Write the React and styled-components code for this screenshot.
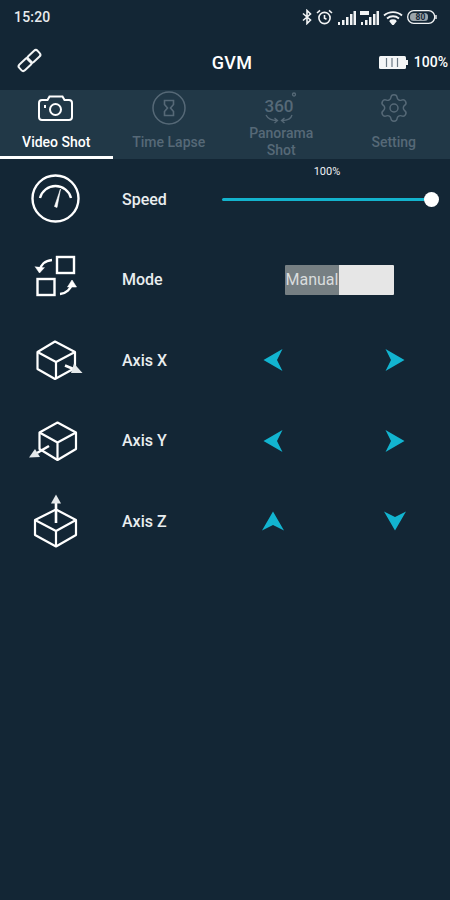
import React from "react";
import styled, { createGlobalStyle } from "styled-components";
import { Settings } from "lucide-react";

const Global = createGlobalStyle`
  html, body { margin: 0; padding: 0; background: #132635; }
  body { font-family: Roboto, "Liberation Sans", sans-serif; }
`;
const Page = styled.div`width: 450px; height: 900px; background: #132635; color: #f2f4f5; overflow: hidden;`;
const StatusBar = styled.div`height: 34px; display: flex; align-items: center; justify-content: space-between; padding: 0 13px 0 14px;`;
const Time = styled.span`font-size: 14px; font-weight: 500; letter-spacing: 0.2px; color: #e8ebed;`;
const StatusIcons = styled.div`display: flex; align-items: center; gap: 4px;`;
const Header = styled.div`height: 56px; display: grid; grid-template-columns: 1fr auto 1fr; align-items: center; padding: 0 2px 0 16px;`;
const Title = styled.div`font-size: 18px; font-weight: 500; letter-spacing: 0.3px; color: #fff;`;
const Power = styled.div`display: flex; align-items: center; justify-content: flex-end; gap: 6px; font-size: 14px; font-weight: 500; color: #fff;`;
const TabBar = styled.div`height: 69px; display: grid; grid-template-columns: repeat(4, 1fr); background: #213847;`;
const Tab = styled.div`
  position: relative; display: flex; flex-direction: column; align-items: center;
  color: ${p => p.$active ? "#ffffff" : "#566977"};
  ${p => p.$active && `&::after { content: ""; position: absolute; left: 0; right: 0; bottom: 0; height: 3px; background: #fff; }`}
`;
const TabIcon = styled.div`height: 36px; display: flex; align-items: center; justify-content: center;`;
const TabLabel = styled.div`
  flex: 1; display: flex; align-items: center; text-align: center; width: 80px; justify-content: center;
  font-size: 14px; line-height: 17px; font-weight: 500; margin-top: -1px;
`;
const Rows = styled.div`display: flex; flex-direction: column;`;
const Row = styled.div`height: 80.5px; display: grid; grid-template-columns: 112px 110px 1fr; align-items: center;`;
const IconCell = styled.div`display: flex; justify-content: center; svg { display: block; }`;
const Label = styled.div`padding-left: 10px; font-size: 16px; font-weight: 500; color: #e9edef;`;
const Slider = styled.div`position: relative; width: 210px; height: 3px; background: #13b3cd; border-radius: 2px;`;
const Thumb = styled.div`position: absolute; right: -7px; top: -6px; width: 15px; height: 15px; border-radius: 50%; background: #fff;`;
const SliderValue = styled.div`position: absolute; left: 0; right: 0; top: -33px; text-align: center; font-size: 11px; color: #f0f2f3;`;
const Toggle = styled.div`margin-left: 63px; width: 109px; height: 30px; display: grid; grid-template-columns: 54px 1fr; border-radius: 1px; overflow: hidden;`;
const ToggleOff = styled.div`background: #767f83; color: #d9dcdd; font-size: 16px; display: flex; align-items: center; justify-content: center;`;
const ToggleOn = styled.div`background: #e6e6e6;`;
const ArrowPair = styled.div`display: flex; justify-content: space-between; padding: 0 43px 0 39px;`;
const Arrow = styled.svg`display: block; width: 24px; height: 24px; fill: #12b4d0; transform: rotate(${p => p.$deg}deg);`;

const NavArrow = ({ deg }) => (
  <Arrow $deg={deg} viewBox="0 0 24 24"><path d="M2.5 12 21.5 1 16 12 21.5 23Z" /></Arrow>
);

const Bluetooth = () => (
  <svg width="10" height="16" viewBox="0 0 10 16" fill="none" stroke="#f2f4f5" strokeWidth="1.6"><path d="M1 4.5 8.5 11 5 14.5V1.5L8.5 5 1 11.5" /></svg>
);
const Alarm = () => (
  <svg width="17" height="16" viewBox="0 0 17 16" fill="none" stroke="#f2f4f5" strokeWidth="1.6"><circle cx="8.5" cy="9" r="5.6" /><path d="M8.5 6v3.2l2 1M1 4l3-2.6M16 4l-3-2.6" /></svg>
);
const Signal = ({ hd }) => (
  <svg width="19" height="15" viewBox="0 0 19 15" fill="#f2f4f5">
    <rect x="1" y="12" width="2" height="3" /><rect x="5" y="10" width="2.5" height="5" /><rect x="9" y="7" width="2.5" height="8" />
    <rect x="13" y={hd ? 4 : 4} width="2.5" height="11" /><rect x="16.5" y="1" width="2.5" height="14" />
    {hd && <rect x="0" y="1" width="9" height="4" />}
  </svg>
);
const Wifi = () => (
  <svg width="20" height="15" viewBox="0 0 20 15" fill="none" stroke="#f2f4f5" strokeWidth="1.8">
    <path d="M1 5.5C6 1 14 1 19 5.5M4 8.5C7.5 5.5 12.5 5.5 16 8.5M7 11C8.5 9.8 11.5 9.8 13 11" /><path d="M10 14.5 8 12h4Z" fill="#f2f4f5" />
  </svg>
);
const PhoneBattery = () => (
  <svg width="30" height="14" viewBox="0 0 30 14">
    <rect x="0.7" y="0.7" width="27" height="12.6" rx="6" fill="none" stroke="#f2f4f5" strokeWidth="1.3" />
    <rect x="3" y="3" width="18" height="8" rx="3.5" fill="#9aa4ab" />
    <path d="M29 5v4" stroke="#f2f4f5" strokeWidth="1.4" />
    <text x="13.5" y="10.2" textAnchor="middle" fontSize="8.5" fontWeight="700" fill="#17293a" fontFamily="Roboto, sans-serif">80</text>
  </svg>
);
const LinkIcon = () => (
  <svg width="27" height="27" viewBox="0 0 27 27" fill="none" stroke="#f2f4f5" strokeWidth="2">
    <g transform="rotate(-43 13.5 13.5)">
      <rect x="1" y="9.5" width="13" height="8" rx="2.5" />
      <rect x="13" y="9.5" width="13" height="8" rx="2.5" />
    </g>
  </svg>
);
const DeviceBattery = () => (
  <svg width="29" height="13" viewBox="0 0 29 13">
    <rect x="0" y="0" width="27" height="13" rx="1.5" fill="#f4f6f7" />
    <rect x="27" y="4" width="2" height="5" fill="#f4f6f7" />
    <path d="M7.5 2v9M13 2v9M18.5 2v9" stroke="#6b7a85" strokeWidth="1.2" />
  </svg>
);
const CameraIcon = () => (
  <svg width="36" height="28" viewBox="0 0 36 28" fill="none" stroke="currentColor" strokeWidth="2">
    <path d="M4 6h5.5l2-3.5h13l2 3.5H31a3 3 0 0 1 3 3v14a3 3 0 0 1-3 3H4a3 3 0 0 1-3-3V9a3 3 0 0 1 3-3Z" />
    <circle cx="17.5" cy="15.5" r="5.5" />
    <path d="M7 11v3" />
  </svg>
);
const HourglassIcon = () => (
  <svg width="34" height="34" viewBox="0 0 34 34" fill="none" stroke="currentColor" strokeWidth="1.5">
    <circle cx="17" cy="17" r="16" />
    <path d="M12.5 9.5h9v4L18.5 17l3 3.5v4h-9v-4l3-3.5-3-3.5Z" strokeWidth="1.6" />
  </svg>
);
const PanoramaIcon = () => (
  <svg width="36" height="34" viewBox="0 0 36 34" fill="none" stroke="currentColor" strokeWidth="1.3">
    <text x="16" y="21" textAnchor="middle" fontSize="17" fontWeight="500" fill="currentColor" stroke="none" fontFamily="Roboto, sans-serif">360</text>
    <circle cx="31" cy="3.5" r="1.5" />
    <path d="M3 24c2 4 7 5.500 11 5.500M29 24c-1 4-6 5.500-10 5.500M11.500 27l3 2.500-3 2.500M21.500 27l-3 2.500 3 2.500" />
  </svg>
);

const SpeedIcon = () => (
  <svg width="56" height="56" viewBox="0 0 56 56" fill="none" stroke="#fff" strokeWidth="2.4">
    <circle cx="27.500" cy="27.500" r="23" />
    <path d="M12 27A16 16 0 0 1 43 27" />
    <path d="M32.500 18 29 36.500 26.500 35.500Z" fill="#fff" strokeWidth="0.6" />
  </svg>
);
const ModeIcon = () => (
  <svg width="56" height="56" viewBox="0 0 56 56" fill="none" stroke="#fff" strokeWidth="2.4">
    <rect x="29" y="5" width="17" height="16" />
    <rect x="9.500" y="27" width="17" height="16" />
    <path d="M24 8C17 8.500 12.500 13 11.500 19" />
    <path d="M7 14.500 11.500 21 16.500 15.500" fill="#fff" strokeWidth="0.6" />
    <path d="M32 42C38 41.500 43 37 44 31" />
    <path d="M39.500 35 44 28 48.500 35Z" fill="#fff" strokeWidth="0.6" />
  </svg>
);
const Cube = ({ children }) => (
  <svg width="56" height="56" viewBox="0 0 56 56" fill="none" stroke="#fff" strokeWidth="2.200" strokeLinejoin="round">
    {children}
  </svg>
);
const AxisXIcon = () => (
  <Cube>
    <path d="M27 9.500 47 20V36L27 47 9.500 37V20Z" />
    <path d="M9.500 20 28 30 47 20M28 30V47" />
    <path d="M37 33.500 48 38" strokeWidth="2.600" />
    <path d="M46 31.500 54.500 41H43Z" fill="#e4e8ea" stroke="none" />
  </Cube>
);
const AxisYIcon = () => (
  <Cube>
    <path d="M29.500 9.500 48 19.500V36L29.500 47 11.500 36V19.500Z" />
    <path d="M11.500 19.500 29.500 29.500 48 19.500M29.500 29.500V47" />
    <path d="M21 33 9 40" strokeWidth="2.600" />
    <path d="M1 44.500 12 44 7 36Z" fill="#e4e8ea" stroke="none" />
  </Cube>
);
const AxisZIcon = () => (
  <Cube>
    <path d="M28 16.500 48 27V42L28 53.500 7 42V27Z" />
    <path d="M7 27 28 38 48 27M28 38V53.500" />
    <path d="M28 30V7" strokeWidth="2.600" />
    <path d="M28 1.500 33 10.500H23Z" fill="#e4e8ea" stroke="none" />
  </Cube>
);

export default function App() {
  return (
    <Page>
      <Global />
      <StatusBar>
        <Time>15:20</Time>
        <StatusIcons>
          <Bluetooth /><Alarm /><Signal /><Signal hd /><Wifi /><PhoneBattery />
        </StatusIcons>
      </StatusBar>
      <Header>
        <div><LinkIcon /></div>
        <Title>GVM</Title>
        <Power><DeviceBattery />100%</Power>
      </Header>
      <TabBar>
        <Tab $active><TabIcon><CameraIcon /></TabIcon><TabLabel>Video Shot</TabLabel></Tab>
        <Tab><TabIcon><HourglassIcon /></TabIcon><TabLabel>Time Lapse</TabLabel></Tab>
        <Tab><TabIcon><PanoramaIcon /></TabIcon><TabLabel>Panorama Shot</TabLabel></Tab>
        <Tab><TabIcon><Settings size={32} strokeWidth={1.1} /></TabIcon><TabLabel>Setting</TabLabel></Tab>
      </TabBar>
      <Rows>
        <Row>
          <IconCell><SpeedIcon /></IconCell><Label>Speed</Label>
          <Slider><SliderValue>100%</SliderValue><Thumb /></Slider>
        </Row>
        <Row>
          <IconCell><ModeIcon /></IconCell><Label>Mode</Label>
          <Toggle><ToggleOff>Manual</ToggleOff><ToggleOn /></Toggle>
        </Row>
        <Row>
          <IconCell><AxisXIcon /></IconCell><Label>Axis X</Label>
          <ArrowPair><NavArrow deg={0} /><NavArrow deg={180} /></ArrowPair>
        </Row>
        <Row>
          <IconCell><AxisYIcon /></IconCell><Label>Axis Y</Label>
          <ArrowPair><NavArrow deg={0} /><NavArrow deg={180} /></ArrowPair>
        </Row>
        <Row>
          <IconCell><AxisZIcon /></IconCell><Label>Axis Z</Label>
          <ArrowPair><NavArrow deg={90} /><NavArrow deg={270} /></ArrowPair>
        </Row>
      </Rows>
    </Page>
  );
}
